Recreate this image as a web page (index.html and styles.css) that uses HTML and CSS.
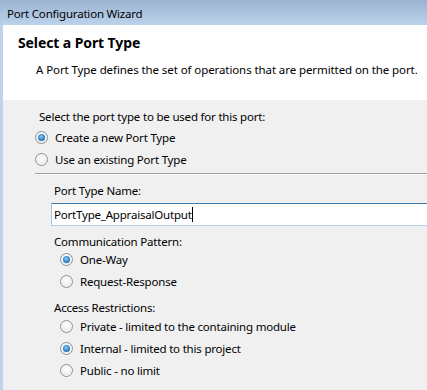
FILE: index.html
```html
<!DOCTYPE html>
<html>
<head>
<meta charset="utf-8">
<link rel="stylesheet" href="styles.css">
</head>
<body>
<div class="titlebar">Port Configuration Wizard</div>
<div class="frame">
  <div class="header">
    <h1 class="title">Select a Port Type</h1>
    <p class="desc">A Port Type defines the set of operations that are permitted on the port.</p>
  </div>
  <div class="content">
    <div class="label lead">Select the port type to be used for this port:</div>
    <div class="radio-row"><span class="radio checked"></span><span>Create a new Port Type</span></div>
    <div class="radio-row"><span class="radio"></span><span>Use an existing Port Type</span></div>
    <div class="separator"></div>
    <div class="group">
      <div class="label">Port Type Name:</div>
      <div class="textbox"><span class="value">PortType_AppraisalOutput</span><span class="caret"></span></div>
      <div class="label section">Communication Pattern:</div>
      <div class="options">
        <div class="radio-row"><span class="radio checked"></span><span>One-Way</span></div>
        <div class="radio-row"><span class="radio"></span><span>Request-Response</span></div>
      </div>
      <div class="label section">Access Restrictions:</div>
      <div class="options access">
        <div class="radio-row"><span class="radio"></span><span>Private - limited to the containing module</span></div>
        <div class="radio-row"><span class="radio checked"></span><span>Internal - limited to this project</span></div>
        <div class="radio-row"><span class="radio"></span><span>Public - no limit</span></div>
      </div>
    </div>
  </div>
</div>
</body>
</html>
```
FILE: styles.css
```css
* { box-sizing: border-box; }
html, body {
  margin: 0;
  padding: 0;
  width: 427px;
  height: 390px;
  overflow: hidden;
}
body {
  font-family: "Noto Sans", "Open Sans", sans-serif;
  font-size: 11.5px;
  letter-spacing: -0.2px;
  color: #000;
  background: #f0f0f0;
  display: flex;
  flex-direction: column;
}
.titlebar {
  height: 25px;
  flex: none;
  background: linear-gradient(#9cb3d1, #bcd3ec);
  padding-left: 7px;
  line-height: 28px;
  color: #000;
  white-space: nowrap;
}
.frame {
  flex: 1;
  border-left: 3px solid #bed4ec;
  display: flex;
  flex-direction: column;
}
.header {
  background: #fff;
  height: 75px;
  flex: none;
  padding: 8px 0 0 15px;
}
.title {
  margin: 0;
  font-size: 14px;
  letter-spacing: -0.1px;
  font-weight: bold;
  line-height: 20px;
}
.desc {
  margin: 9px 0 0 18px;
  line-height: 16px;
  letter-spacing: -0.09px;
  white-space: nowrap;
}
.content {
  flex: 1;
  background: #f0f0f0;
  padding: 9px 0 0 32px;
}
.label {
  line-height: 16px;
  white-space: nowrap;
}
.lead { padding-left: 4px; margin-bottom: 1px; }
.radio-row {
  height: 22px;
  display: flex;
  align-items: center;
  gap: 7px;
  white-space: nowrap;
}
.radio {
  width: 13px;
  height: 13px;
  border-radius: 50%;
  border: 1px solid #8f9090;
  background: radial-gradient(circle at 50% 40%, #ffffff 0%, #f2f2f2 45%, #d6d6d6 100%);
  box-shadow: inset 0 0 0 1px #f8f8f8;
  position: relative;
  flex: none;
}
.radio.checked::after {
  content: "";
  position: absolute;
  left: 2px;
  top: 2px;
  width: 7px;
  height: 7px;
  border-radius: 50%;
  background: radial-gradient(circle at 45% 40%, #8fd0fb 0%, #3b8fd6 45%, #16508c 100%);
}
.separator {
  height: 1px;
  background: #a0a0a0;
  margin: 3px 0 0 0;
  box-shadow: 0 1px 0 #ffffff;
}
.group {
  padding: 9px 0 0 19px;
}
.textbox {
  margin: 4px 0 0 -3px;
  height: 23px;
  background: #fff;
  border-top: 1px solid #3d7bad;
  border-left: 1px solid #a4c9e3;
  border-bottom: 1px solid #b5cfe7;
  display: flex;
  align-items: center;
  padding-left: 2px;
  white-space: nowrap;
}
.caret {
  width: 1px;
  height: 15px;
  background: #000;
}
.section { margin-top: 8px; }
.options {
  padding-left: 6px;
  margin-top: -2px;
}
.options.access { margin-top: -1px; }
```
